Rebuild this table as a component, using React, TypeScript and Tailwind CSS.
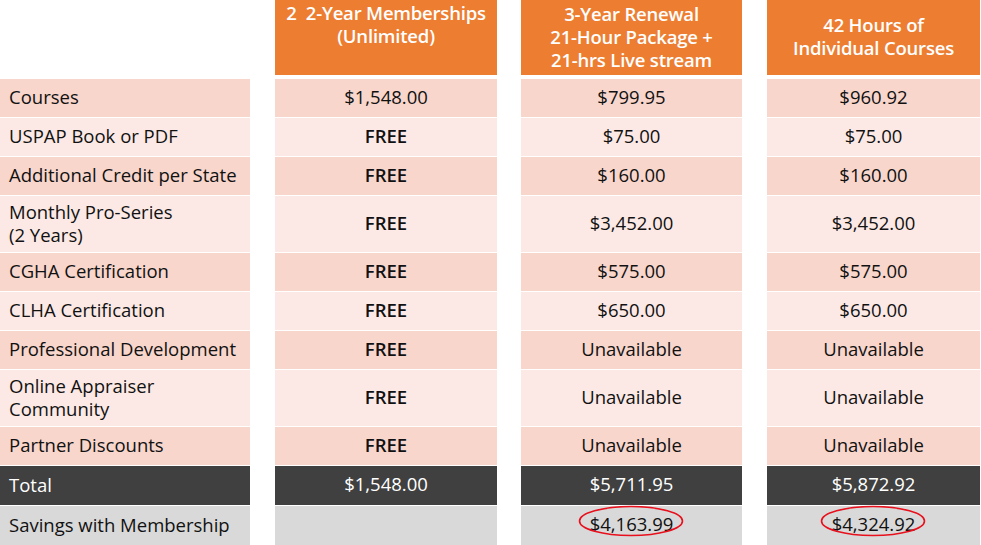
type RowData = {
  label: string[];
  cols: string[];
  tone: "dark" | "light" | "total" | "savings";
  h: string;
};

const rows: RowData[] = [
  { label: ["Courses"], cols: ["$1,548.00", "$799.95", "$960.92"], tone: "dark", h: "h-[38px]" },
  { label: ["USPAP Book or PDF"], cols: ["FREE", "$75.00", "$75.00"], tone: "light", h: "h-[38px]" },
  { label: ["Additional Credit per State"], cols: ["FREE", "$160.00", "$160.00"], tone: "dark", h: "h-[38px]" },
  { label: ["Monthly Pro-Series", "(2 Years)"], cols: ["FREE", "$3,452.00", "$3,452.00"], tone: "light", h: "h-[56px]" },
  { label: ["CGHA Certification"], cols: ["FREE", "$575.00", "$575.00"], tone: "dark", h: "h-[38px]" },
  { label: ["CLHA Certification"], cols: ["FREE", "$650.00", "$650.00"], tone: "light", h: "h-[38px]" },
  { label: ["Professional Development"], cols: ["FREE", "Unavailable", "Unavailable"], tone: "dark", h: "h-[38px]" },
  { label: ["Online Appraiser", "Community"], cols: ["FREE", "Unavailable", "Unavailable"], tone: "light", h: "h-[56px]" },
  { label: ["Partner Discounts"], cols: ["FREE", "Unavailable", "Unavailable"], tone: "dark", h: "h-[38px]" },
  { label: ["Total"], cols: ["$1,548.00", "$5,711.95", "$5,872.92"], tone: "total", h: "h-[39px]" },
  { label: ["Savings with Membership"], cols: ["", "$4,163.99", "$4,324.92"], tone: "savings", h: "h-[39px]" },
];

const toneClass = {
  dark: "bg-[#f8d6cc] text-[#111]",
  light: "bg-[#fce9e5] text-[#111]",
  total: "bg-[#404040] text-white",
  savings: "bg-[#d9d9d9] text-[#111]",
};

const widths = ["w-[222px] ml-[25px]", "w-[221px] ml-[24px]", "w-[213px] ml-[25px]"];

function Circled({ text }: { text: string }) {
  return (
    <span className="relative inline-block">
      {text}
      <svg
        className="absolute left-1/2 top-[-5px] -translate-x-1/2"
        width="106"
        height="32"
        viewBox="0 0 106 32"
      >
        <ellipse cx="53" cy="16" rx="51.5" ry="14.5" fill="none" stroke="#e8101c" strokeWidth="1.6" />
      </svg>
    </span>
  );
}

function App() {
  return (
    <div className="h-[545px] w-[981px] bg-white font-['Open_Sans','Liberation_Sans',sans-serif] text-[18.5px]">
      {/* Header */}
      <div className="flex h-[79px]">
        <div className="w-[250px]" />
        <div className="ml-[25px] flex h-[75px] w-[222px] flex-col items-center bg-[#ed7d31] pt-[1px] text-[18.5px] font-semibold leading-[23px] tracking-[-0.2px] text-white">
          <span className="whitespace-pre">2  2-Year Memberships</span>
          <span>(Unlimited)</span>
        </div>
        <div className="ml-[24px] flex h-[75px] w-[221px] flex-col items-center justify-center bg-[#ed7d31] pb-[3px] text-[18.5px] font-semibold leading-[23px] tracking-[-0.2px] text-white">
          <span>3-Year Renewal</span>
          <span>21-Hour Package +</span>
          <span>21-hrs Live stream</span>
        </div>
        <div className="ml-[25px] flex h-[75px] w-[213px] flex-col items-center justify-center bg-[#ed7d31] pb-[3px] text-[18.5px] font-semibold leading-[23px] tracking-[-0.2px] text-white">
          <span>42 Hours of</span>
          <span>Individual Courses</span>
        </div>
      </div>

      {/* Body rows */}
      {rows.map((r) => (
        <div key={r.label.join(" ")} className={`flex ${r.h} mb-px`}>
          <div
            className={`flex w-[250px] flex-col justify-center pb-[3px] pl-[9px] leading-[23px] ${toneClass[r.tone]}`}
          >
            {r.label.map((l) => (
              <span key={l}>{l}</span>
            ))}
          </div>
          {r.cols.map((c, i) => (
            <div
              key={i}
              className={`flex items-center justify-center pb-[3px] ${widths[i]} ${toneClass[r.tone]} ${
                c === "FREE" ? "font-semibold" : ""
              }`}
            >
              {r.tone === "savings" && c ? <Circled text={c} /> : c}
            </div>
          ))}
        </div>
      ))}
    </div>
  );
}

export default App;
